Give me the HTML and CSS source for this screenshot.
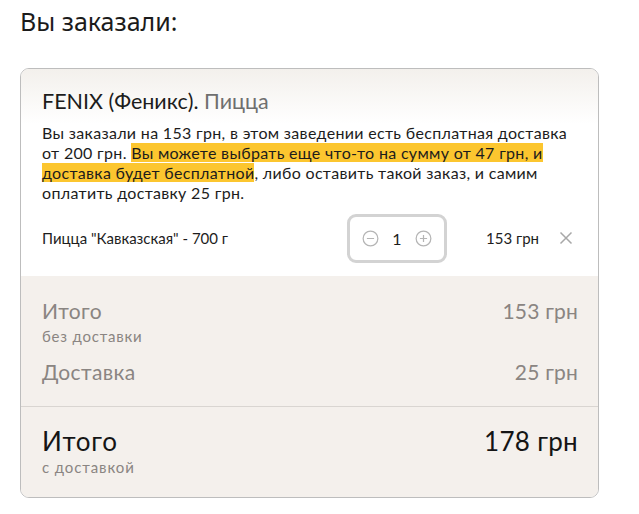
FILE: index.html
```html
<!DOCTYPE html>
<html lang="ru">
<head>
<meta charset="utf-8">
<link rel="stylesheet" href="styles.css">
</head>
<body>
<h1 class="page-title">Вы заказали:</h1>
<div class="card">
  <div class="card-head">
    <div class="shop"><span class="shop-name">FENIX (Феникс).</span> <span class="shop-cat">Пицца</span></div>
    <p class="note">Вы заказали на 153 грн, в этом заведении есть бесплатная доставка от 200 грн. <mark class="hl">Вы можете выбрать еще что-то на сумму от 47 грн, и доставка будет бесплатной</mark>, либо оставить такой заказ, и самим оплатить доставку 25 грн.</p>
  </div>
  <div class="item">
    <div class="item-name">Пицца "Кавказская" - 700 г</div>
    <div class="qty">
      <svg class="qbtn" viewBox="0 0 18 18" width="17" height="17"><circle cx="9" cy="9" r="7.8" fill="none" stroke="#b5b5b5" stroke-width="1.3"/><path d="M5.2 9h7.6" stroke="#b5b5b5" stroke-width="1.3"/></svg>
      <span class="qnum">1</span>
      <svg class="qbtn" viewBox="0 0 18 18" width="17" height="17"><circle cx="9" cy="9" r="7.8" fill="none" stroke="#b5b5b5" stroke-width="1.3"/><path d="M5.2 9h7.6M9 5.2v7.6" stroke="#b5b5b5" stroke-width="1.3"/></svg>
    </div>
    <div class="item-price">153 грн</div>
    <svg class="remove" viewBox="0 0 14 14" width="14" height="14"><path d="M1.5 1.5l11 11M12.5 1.5l-11 11" stroke="#a8a8a8" stroke-width="1.5"/></svg>
  </div>
  <div class="summary">
    <div class="sum-rows">
      <div class="sum-row">
        <div class="sum-left"><div class="sum-label">Итого</div><div class="sum-sub">без доставки</div></div>
        <div class="sum-val">153 грн</div>
      </div>
      <div class="sum-row sum-row-last">
        <div class="sum-left"><div class="sum-label">Доставка</div></div>
        <div class="sum-val">25 грн</div>
      </div>
    </div>
    <div class="total-row">
      <div class="sum-left"><div class="total-label">Итого</div><div class="total-sub">с доставкой</div></div>
      <div class="total-val">178 грн</div>
    </div>
  </div>
</div>
</body>
</html>
```
FILE: styles.css
```css
* { box-sizing: border-box; }
body {
  margin: 0;
  padding: 0 20px;
  font-family: Lato, "Noto Sans", sans-serif;
  color: #1d1d1d;
  background: #fff;
}
.page-title {
  margin: 0;
  padding-top: 6px;
  height: 68px;
  font-family: "Noto Sans", sans-serif;
  font-weight: 400;
  font-size: 25px;
  line-height: 30px;
  color: #1b1b1b;
}
.card {
  width: 579px;
  border: 1px solid #bdbdbd;
  border-radius: 9px;
  overflow: hidden;
  background: #fff;
}
.card-head {
  padding: 19px 21px 0 21px;
  background: linear-gradient(#f3f0ec 0, #ffffff 55px);
}
.shop {
  font-size: 21.5px;
  line-height: 26px;
}
.shop-name { color: #1c1c1c; }
.shop-cat { color: #6f6f6f; }
.note {
  margin: 9px 0 0;
  font-size: 16px;
  line-height: 20px;
  letter-spacing: 0.32px;
  color: #1c1c1c;
}
.hl {
  background: #fcc62f;
  color: #1c1c1c;
}
.item {
  display: flex;
  align-items: center;
  height: 73px;
  padding: 0 25px 3px 21px;
}
.item-name {
  flex: 1;
  font-size: 15px;
}
.qty {
  width: 100px;
  height: 49px;
  border: 3px solid #d3d3d3;
  border-radius: 9px;
  display: flex;
  align-items: center;
  justify-content: center;
  gap: 13px;
}
.qnum { font-size: 16px; color: #1c1c1c; }
.item-price {
  width: 92px;
  text-align: right;
  font-size: 15px;
}
.remove { margin-left: 20px; }
.summary {
  background: #f4f0ec;
}
.sum-rows {
  padding: 22px 20px 21px 21px;
}
.sum-row {
  display: flex;
  justify-content: space-between;
  align-items: flex-start;
  margin-bottom: 11px;
}
.sum-row-last { margin-bottom: 0; }
.sum-label {
  font-size: 21px;
  line-height: 26px;
  letter-spacing: 0.4px;
  color: #8a8582;
}
.sum-sub {
  font-size: 15px;
  line-height: 24px;
  letter-spacing: 0.8px;
  color: #8a8582;
}
.sum-val {
  font-size: 21px;
  line-height: 26px;
  letter-spacing: 0.2px;
  color: #8a8582;
}
.total-row {
  border-top: 1px solid #d9d5d1;
  display: flex;
  justify-content: space-between;
  align-items: flex-start;
  padding: 19px 20px 19px 21px;
}
.total-label {
  font-size: 26px;
  line-height: 30px;
  letter-spacing: 0.8px;
  color: #151515;
}
.total-sub {
  font-size: 15px;
  line-height: 22px;
  letter-spacing: 0.9px;
  color: #8a8582;
}
.total-val {
  font-size: 26px;
  line-height: 30px;
  letter-spacing: 0.3px;
  color: #151515;
}
```
